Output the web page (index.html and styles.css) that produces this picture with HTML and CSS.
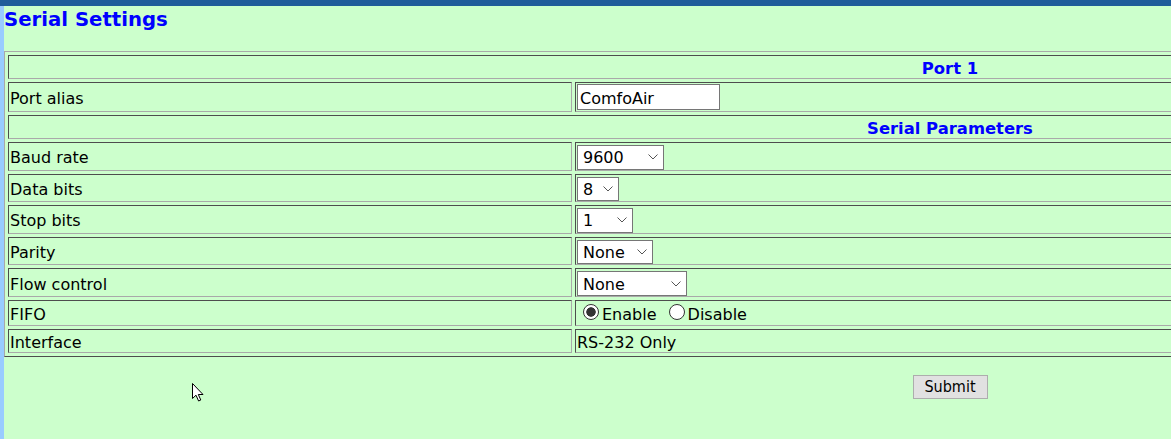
FILE: index.html
```html
<!DOCTYPE html>
<html lang="en">
<head>
<meta charset="utf-8">
<title>Serial Settings</title>
<link rel="stylesheet" href="styles.css">
</head>
<body>
<div class="topbar"></div>
<div class="page">
  <h1 class="title">Serial Settings</h1>
  <form class="settings" onsubmit="return false">
    <table class="grid">
      <colgroup><col class="col-label"><col class="col-value"></colgroup>
      <tr class="row-head"><th colspan="2">Port 1</th></tr>
      <tr class="row-input"><td>Port alias</td><td class="ctl ctl-input"><input class="text" type="text" value="ComfoAir"></td></tr>
      <tr class="row-head"><th colspan="2">Serial Parameters</th></tr>
      <tr class="row-sel"><td>Baud rate</td><td class="ctl"><select class="sel w-baud"><option>9600</option><option>19200</option><option>38400</option></select></td></tr>
      <tr class="row-sel"><td>Data bits</td><td class="ctl"><select class="sel w-data"><option>8</option><option>7</option></select></td></tr>
      <tr class="row-sel"><td>Stop bits</td><td class="ctl"><select class="sel w-stop"><option>1</option><option>2</option></select></td></tr>
      <tr class="row-sel"><td>Parity</td><td class="ctl"><select class="sel w-parity"><option>None</option><option>Odd</option><option>Even</option></select></td></tr>
      <tr class="row-sel"><td>Flow control</td><td class="ctl"><select class="sel w-flow"><option>None</option><option>Hardware</option></select></td></tr>
      <tr class="row-radio"><td>FIFO</td><td><label class="opt"><input class="radio" type="radio" name="fifo" checked>Enable</label> <label class="opt"><input class="radio" type="radio" name="fifo">Disable</label></td></tr>
      <tr class="row-text"><td>Interface</td><td>RS-232 Only</td></tr>
    </table>
    <div class="actions"><button class="btn" type="submit">Submit</button></div>
  </form>
  <svg class="cursor" width="13" height="20" viewBox="0 0 13 20" aria-hidden="true"><path d="M0.5 0.5 L0.5 15.5 L4 12.2 L6.6 18 L8.8 17 L6.3 11.5 L11 11.5 Z" fill="#fff" stroke="#000" stroke-width="1" stroke-linejoin="miter"/></svg>
</div>
</body>
</html>
```
FILE: styles.css
```css
html, body {
  margin: 0;
  padding: 0;
  background: #ccffcc;
  overflow: hidden;
}
body {
  font-family: "DejaVu Sans", Verdana, sans-serif;
  font-size: 16px;
  color: #000;
}
.topbar {
  height: 6px;
  background: #1f5c9a;
}
.page {
  border-left: 4px solid #99ccff;
  min-height: calc(100vh - 6px);
  box-sizing: border-box;
}
.title {
  margin: 0;
  padding: 3px 0 0 0;
  height: 45px;
  box-sizing: border-box;
  font-size: 19.7px;
  font-weight: bold;
  color: #0000ff;
  line-height: 22px;
}
.settings {
  width: 1892px;
  margin: 0;
}
.grid {
  width: 1892px;
  table-layout: fixed;
  border-collapse: separate;
  border-spacing: 3px;
  border: 1px solid;
  border-color: #a9a9a9 #4d4d4d #4d4d4d #a9a9a9;
}
.col-label { width: 564px; }
.grid td, .grid th {
  border: 1px solid;
  border-color: #4d4d4d #a9a9a9 #a9a9a9 #4d4d4d;
  padding: 3px 1px 0 1px;
  vertical-align: middle;
  text-align: left;
  white-space: nowrap;
  line-height: 19px;
}
.grid th {
  text-align: center;
  color: #0000ff;
  font-weight: bold;
  font-size: 16.4px;
}
.grid td.ctl {
  padding: 2px 1px 0 1px;
  line-height: 0;
}
.grid td.ctl-input {
  padding: 1px 1px 1px 1px;
}
.row-head { height: 24px; }
.row-input { height: 30px; }
.row-sel { height: 28.6px; }
.row-radio { height: 26px; }
.row-text { height: 24px; }

.text {
  box-sizing: border-box;
  width: 143px;
  height: 26px;
  margin: 0;
  padding: 2px 2px 0 2px;
  border: 1px solid #767676;
  border-radius: 0;
  background: #fff;
  font-family: "DejaVu Sans", Verdana, sans-serif;
  font-size: 16px;
  line-height: normal;
  color: #000;
  vertical-align: top;
}
.sel {
  -webkit-appearance: none;
  appearance: none;
  box-sizing: border-box;
  height: 24.6px;
  margin: 0;
  padding: 1px 0 0 5px;
  border: 1px solid #767676;
  border-radius: 0;
  background-color: #fff;
  background-image: url("data:image/svg+xml,%3Csvg xmlns='http://www.w3.org/2000/svg' width='10' height='6' viewBox='0 0 10 6'%3E%3Cpath d='M0.5 0.5 L5 5 L9.5 0.5' fill='none' stroke='%23555' stroke-width='1'/%3E%3C/svg%3E");
  background-repeat: no-repeat;
  background-position: right 5px center;
  font-family: "DejaVu Sans", Verdana, sans-serif;
  font-size: 16px;
  line-height: normal;
  color: #000;
  vertical-align: top;
}
.w-baud { width: 87px; }
.w-data { width: 42px; }
.w-stop { width: 56px; }
.w-parity { width: 76px; }
.w-flow { width: 110px; }

.opt { white-space: nowrap; }
.opt + .opt { margin-left: 1px; }
.radio {
  -webkit-appearance: none;
  appearance: none;
  box-sizing: border-box;
  width: 16px;
  height: 16px;
  margin: 0 3px 0 6px;
  border: 1px solid #333;
  border-radius: 50%;
  background: #fff;
  vertical-align: baseline;
}
.radio:checked {
  background: radial-gradient(circle, #333 0 4.4px, #fff 5px);
}
.actions {
  width: 1892px;
  text-align: center;
  padding-top: 18px;
}
.btn {
  box-sizing: border-box;
  width: 75px;
  height: 24px;
  padding: 0;
  border: 1px solid #adadad;
  border-radius: 0;
  background: #e1e1e1;
  font-family: "DejaVu Sans Condensed", "DejaVu Sans", sans-serif;
  font-size: 16px;
  color: #000;
}
.cursor {
  position: absolute;
  left: 192px;
  top: 383px;
}
```
